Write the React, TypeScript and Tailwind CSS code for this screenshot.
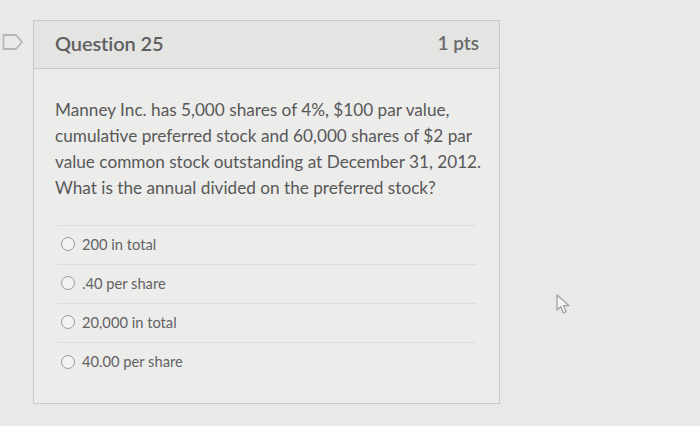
import React from "react";

const options = ["200 in total", ".40 per share", "20,000 in total", "40.00 per share"];
const lines = [
  "Manney Inc. has 5,000 shares of 4%, $100 par value,",
  "cumulative preferred stock and 60,000 shares of $2 par",
  "value common stock outstanding at December 31, 2012.",
  "What is the annual divided on the preferred stock?",
];

export default function App() {
  return (
    <div
      className="relative w-[700px] h-[426px] bg-[#e9e9e8] overflow-hidden"
      style={{ fontFamily: "Lato, 'Noto Sans', sans-serif" }}
    >
      <div className="flex pt-[20px]">
        <div className="w-[33px] shrink-0 pt-[13px] pl-[2px]">
          <svg width="22" height="18" viewBox="0 0 22 18">
            <path d="M1.5 2 H14 L20 9 L14 16 H1.5 Z" fill="none" stroke="#b4b6ba" strokeWidth="1.8" strokeLinejoin="round" />
          </svg>
        </div>
        <div className="w-[467px] h-[384px] border border-[#c9c9c9] bg-[#ececeb] flex flex-col">
          <div className="h-[48px] shrink-0 bg-[#e4e4e3] border-b border-[#c9c9c9] flex items-center justify-between pl-[21px] pr-[20px] pb-[3px]">
            <span className="text-[20px] font-semibold text-[#5f5f5f] tracking-[-0.1px]">Question 25</span>
            <span className="text-[19px] font-semibold text-[#6a6a6a]">1 pts</span>
          </div>
          <div className="px-[21px] pt-[28px]">
            <div className="text-[17.2px] leading-[26px] text-[#585858]">
              {lines.map((l) => (
                <div key={l} className="whitespace-nowrap">{l}</div>
              ))}
            </div>
            <div className="mt-[24px] mx-[2px] border-t border-[#dcdcdc]">
              {options.map((o, i) => (
                <div
                  key={o}
                  className={`h-[39px] flex items-center pl-[4px] pb-[2px] ${i < options.length - 1 ? "border-b border-[#dcdcdc]" : ""}`}
                >
                  <span className="w-[14px] h-[14px] rounded-full border-[1.5px] border-[#9a9a9a] bg-[#f2f2f2] shrink-0" />
                  <span className="ml-[7px] text-[14.7px] text-[#636363]">{o}</span>
                </div>
              ))}
            </div>
          </div>
        </div>
      </div>
      <svg className="absolute left-[555px] top-[294px]" width="20" height="21" viewBox="0 0 20 21">
        <path d="M2 1 L2 16 L5.8 12.6 L8.5 19 L11.2 17.8 L8.6 11.6 L14 11.6 Z" fill="#f4f4f4" stroke="#9d9d9d" strokeWidth="1.2" strokeLinejoin="round" />
      </svg>
    </div>
  );
}
